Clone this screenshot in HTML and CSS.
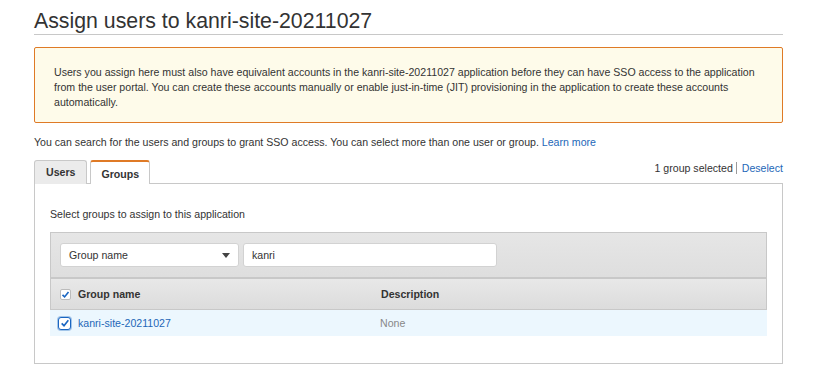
FILE: index.html
```html
<!DOCTYPE html>
<html lang="en">
<head>
    <meta charset="UTF-8">
    <title>Assign users</title>
    <link rel="stylesheet" href="styles.css">
</head>
<body>
    <div class="page">
        <h1>Assign users to kanri-site-20211027</h1>
        <div class="notice">
            Users you assign here must also have equivalent accounts in the kanri-site-20211027 application before they can have SSO access to the application from the user portal. You can create these accounts manually or enable just-in-time (JIT) provisioning in the application to create these accounts automatically.
        </div>
        <p class="intro">You can search for the users and groups to grant SSO access. You can select more than one user or group. <a href="#">Learn more</a></p>

        <div class="tabs-row">
            <div class="tabs">
                <span class="tab">Users</span>
                <span class="tab active">Groups</span>
            </div>
            <div class="selection">
                <span class="sel-count">1 group selected</span>
                <a href="#">Deselect</a>
            </div>
        </div>

        <div class="panel">
            <p class="hint">Select groups to assign to this application</p>
            <div class="table">
                <div class="filter">
                    <div class="select">
                        <span>Group name</span>
                        <span class="caret"></span>
                    </div>
                    <div class="search">kanri</div>
                </div>
                <div class="row head">
                    <div class="col-name">
                        <span class="check small"><svg viewBox="0 0 12 12" width="9" height="9"><path d="M2 6.5 L4.8 9.2 L10 2.8" fill="none" stroke="#1a66c2" stroke-width="2.2"/></svg></span>
                        Group name
                    </div>
                    <div class="col-desc">Description</div>
                </div>
                <div class="row item">
                    <div class="col-name">
                        <span class="check"><svg viewBox="0 0 12 12" width="10" height="10"><path d="M2 6.5 L4.8 9.2 L10 2.8" fill="none" stroke="#1a66c2" stroke-width="2"/></svg></span>
                        <a href="#">kanri-site-20211027</a>
                    </div>
                    <div class="col-desc muted">None</div>
                </div>
            </div>
        </div>
    </div>
</body>
</html>
```

FILE: styles.css
```css
body {
    margin: 0;
    background: #fff;
    color: #333;
    font-family: "Liberation Sans", Arial, sans-serif;
    font-size: 10.6px;
}
a {
    color: #1d67b8;
    text-decoration: none;
}
.page {
    width: 749px;
    margin-left: 34px;
}
h1 {
    margin: 0;
    padding-top: 8px;
    height: 26px;
    font-size: 21.3px;
    font-weight: normal;
    line-height: 26px;
    color: #333;
    border-bottom: 1px solid #c8c8c8;
}
.notice {
    margin-top: 12px;
    height: 76px;
    box-sizing: border-box;
    padding: 17px 19px 0;
    background: #fefbea;
    border: 1px solid #df7a26;
    border-radius: 2px;
    line-height: 15px;
    color: #333;
}
.intro {
    margin: 12px 0 0;
    line-height: 14px;
}
.tabs-row {
    display: flex;
    justify-content: space-between;
    align-items: flex-end;
    margin-top: 11px;
}
.tabs {
    display: flex;
    gap: 3px;
    margin-bottom: -1px;
    position: relative;
    z-index: 1;
}
.tab {
    height: 23px;
    line-height: 23px;
    padding: 0 11px;
    font-weight: bold;
    color: #333;
    background: #ebebeb;
    border: 1px solid #c8c8c8;
    border-bottom: none;
    border-radius: 3px 3px 0 0;
}
.tab.active {
    background: #fff;
    border-top: 2px solid #df7a26;
    height: 22px;
    line-height: 24px;
    padding: 0 10px;
}
.selection {
    padding-bottom: 9px;
    color: #333;
}
.sel-count {
    border-right: 1px solid #999;
    padding-right: 3px;
    margin-right: 2px;
}
.panel {
    border: 1px solid #c8c8c8;
    height: 181px;
    box-sizing: border-box;
    padding: 0 15px;
}
.hint {
    margin: 23px 0 0;
    line-height: 14px;
}
.table {
    margin-top: 11px;
}
.filter {
    display: flex;
    gap: 4px;
    padding: 10px 9px;
    height: 24px;
    background: linear-gradient(#e6e6e6, #dedede);
    border: 1px solid #c8c8c8;
    border-bottom: 2px solid #c8c8c8;
}
.select, .search {
    background: #fff;
    border: 1px solid #d2d2d2;
    border-radius: 3px;
    height: 24px;
    box-sizing: border-box;
    line-height: 22px;
    padding: 0 8px;
}
.select {
    width: 179px;
    display: flex;
    justify-content: space-between;
    align-items: center;
}
.caret {
    width: 0;
    height: 0;
    border-left: 4px solid transparent;
    border-right: 4px solid transparent;
    border-top: 5px solid #444;
}
.search {
    width: 254px;
}
.row {
    display: flex;
    align-items: center;
}
.row.head {
    height: 30px;
    background: linear-gradient(#e8e8e8, #dcdcdc);
    border: 1px solid #c8c8c8;
    border-top: none;
    font-weight: bold;
}
.row.item {
    height: 26px;
    background: #ecf7fe;
}
.col-name {
    width: 322px;
    padding-left: 8px;
    display: flex;
    align-items: center;
    gap: 7px;
}
.col-desc {
    flex: 1;
}
.muted {
    color: #888;
}
.check {
    width: 13px;
    height: 13px;
    box-sizing: border-box;
    border: 1px solid #1a66c2;
    border-radius: 3px;
    background: #fff;
    box-shadow: 0 0 0 1px rgba(26, 102, 194, 0.35);
    display: flex;
    align-items: center;
    justify-content: center;
}
.check.small {
    width: 11px;
    height: 11px;
    margin-left: 1px;
    border-color: #bbb;
    border-radius: 2px;
    box-shadow: none;
}
```
